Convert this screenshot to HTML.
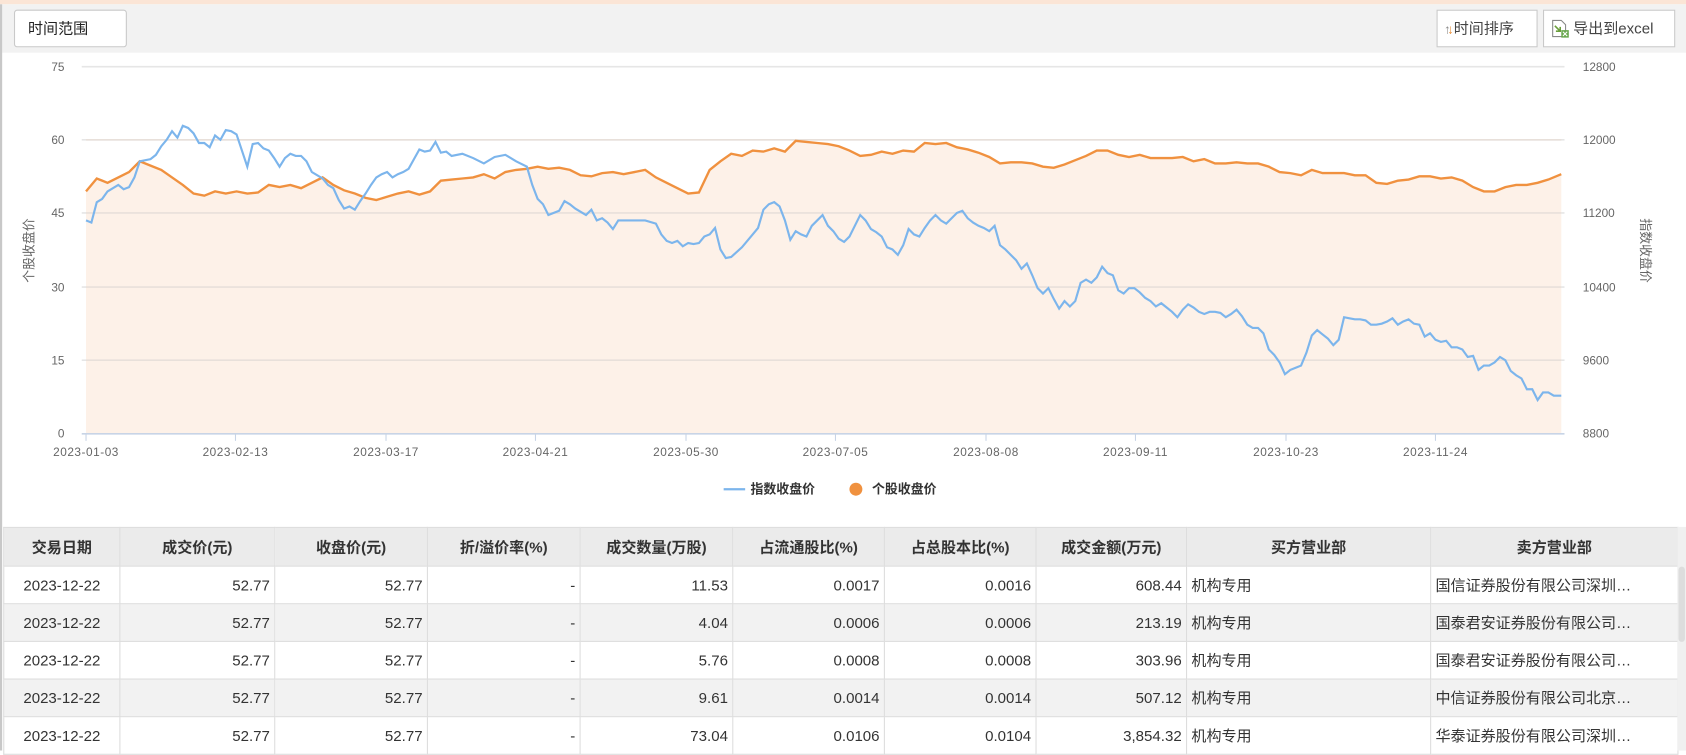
<!DOCTYPE html>
<html><head><meta charset="utf-8"><style>
html,body{margin:0;padding:0;width:1686px;height:750px;overflow:hidden;background:#fff}
#w{position:absolute;left:0;top:0;width:1568px;height:698px;transform:scale(1.07526);transform-origin:0 0;font-family:"Liberation Sans","Noto Sans CJK SC",sans-serif;color:#333}
.strip{position:absolute;left:0;top:0;width:1568px;height:4px;background:#fbe5d6}
.bar{position:absolute;left:0;top:4px;width:1568px;height:45px;background:#f2f2f2}
.lb{position:absolute;left:0;top:4px;width:2px;height:694px;background:#c8c8c8}
.btn{position:absolute;top:9px;height:33px;background:#fff;border:1px solid #c9c9c9;font-size:14px;line-height:33px;box-sizing:content-box}
table{position:absolute;left:3px;top:490px;border-collapse:collapse;table-layout:fixed;font-size:14px}
td,th{height:34px;border:1px solid #ddd;padding:0 4px;white-space:nowrap;overflow:hidden}
th{background:#ebebeb;font-weight:bold;text-align:center;height:35px;color:#333}
td{text-align:right;color:#333}
td.c{text-align:center}td.l{text-align:left}
tr.g td{background:#f2f2f2}
.sb{position:absolute;left:1560px;top:490px;width:8px;height:208px;background:#f0f0f0}
.sb i{position:absolute;left:1px;top:37px;width:6px;height:70px;background:#ddd;border-radius:3px}
</style></head><body><div id="w">
<div class="strip"></div><div class="bar"></div><div class="lb"></div>
<div class="btn" style="left:13px;width:103px;border-radius:3px;padding-left:0"><span style="margin-left:12px;color:#222">时间范围</span></div>
<div class="btn" style="left:1336px;width:92px;color:#444"><span style="margin-left:6px;font-size:12px;color:#888">↑</span><span style="font-size:12px;color:#e8892f;margin-left:-3px">↓</span>时间排序</div>
<div class="btn" style="left:1435px;width:121px;color:#444"><svg width="18" height="18" viewBox="0 0 18 18" style="position:absolute;left:6px;top:8px"><path d="M2 1h8l4 4v11H2z" fill="#fff" stroke="#888"/><path d="M4 6l5 5M9 7v4H5" stroke="#6a9e3b" stroke-width="1.5" fill="none"/><rect x="10" y="10" width="7" height="7" fill="#6aa84f"/><path d="M11.5 11.5l4 4M15.5 11.5l-4 4" stroke="#fff"/></svg><span style="margin-left:27px">导出到excel</span></div>
<svg style="position:absolute;left:0;top:49px" width="1568" height="440" viewBox="0 49 1568 440" font-family="Liberation Sans,Noto Sans CJK SC,sans-serif">
<g stroke="#e6e6e6" stroke-width="1.5"><line x1="76" y1="62" x2="1455" y2="62"/><line x1="76" y1="130" x2="1455" y2="130"/><line x1="76" y1="198" x2="1455" y2="198"/><line x1="76" y1="267" x2="1455" y2="267"/><line x1="76" y1="335" x2="1455" y2="335"/></g>
<g id="or"></g>
<polygon fill="#fdf1e8" points="80,403 80,178 90,166 95,168 100,170 110,165 120,160 130,150 140,154 150,158 160,165 170,172 180,180 190,182 200,178 210,180 220,178 230,180 240,179 250,172 260,174 270,172 280,175 290,170 300,165 310,172 320,177 330,180 340,184 350,186 360,183 370,180 380,178 390,181 400,178 410,168 420,167 430,166 440,165 450,162 460,166 470,160 480,158 490,157 500,155 510,157 520,156 530,158 540,163 550,164 560,161 570,160 580,162 590,160 600,158 610,165 620,170 630,175 640,180 650,179 660,158 670,150 680,143 690,145 700,140 710,141 720,138 730,141 740,131 750,132 760,133 770,134 780,136 790,140 800,145 810,144 820,141 830,143 840,140 850,141 860,133 870,134 880,133 890,137 900,139 910,142 920,146 930,152 940,151 950,151 960,152 970,155 980,156 990,153 1000,149 1010,145 1020,140 1030,140 1040,144 1050,146 1060,144 1070,147 1080,147 1090,147 1100,146 1110,150 1120,148 1130,152 1140,152 1150,151 1160,152 1170,152 1180,155 1190,160 1200,161 1210,163 1220,158 1230,161 1240,161 1250,161 1260,163 1270,163 1280,170 1290,171 1300,168 1310,167 1320,164 1330,164 1340,166 1350,165 1360,168 1370,174 1380,178 1390,178 1400,174 1410,172 1420,172 1430,170 1440,167 1452,162 1452,403"/>
<g stroke="#e8e0da" stroke-width="1.5"><line x1="80" y1="198" x2="1452" y2="198"/><line x1="80" y1="267" x2="1452" y2="267"/><line x1="80" y1="335" x2="1452" y2="335"/><line x1="80" y1="130" x2="1452" y2="130"/></g>
<line x1="76" y1="403.5" x2="1455" y2="403.5" stroke="#c8d4e6" stroke-width="1.5"/>
<g stroke="#c8d4e6"><line x1="80" y1="403" x2="80" y2="410"/><line x1="219" y1="403" x2="219" y2="410"/><line x1="359" y1="403" x2="359" y2="410"/><line x1="498" y1="403" x2="498" y2="410"/><line x1="638" y1="403" x2="638" y2="410"/><line x1="777" y1="403" x2="777" y2="410"/><line x1="917" y1="403" x2="917" y2="410"/><line x1="1056" y1="403" x2="1056" y2="410"/><line x1="1196" y1="403" x2="1196" y2="410"/><line x1="1335" y1="403" x2="1335" y2="410"/></g>
<polyline fill="none" stroke="#f0913f" stroke-width="2.2" points="80,178 90,166 95,168 100,170 110,165 120,160 130,150 140,154 150,158 160,165 170,172 180,180 190,182 200,178 210,180 220,178 230,180 240,179 250,172 260,174 270,172 280,175 290,170 300,165 310,172 320,177 330,180 340,184 350,186 360,183 370,180 380,178 390,181 400,178 410,168 420,167 430,166 440,165 450,162 460,166 470,160 480,158 490,157 500,155 510,157 520,156 530,158 540,163 550,164 560,161 570,160 580,162 590,160 600,158 610,165 620,170 630,175 640,180 650,179 660,158 670,150 680,143 690,145 700,140 710,141 720,138 730,141 740,131 750,132 760,133 770,134 780,136 790,140 800,145 810,144 820,141 830,143 840,140 850,141 860,133 870,134 880,133 890,137 900,139 910,142 920,146 930,152 940,151 950,151 960,152 970,155 980,156 990,153 1000,149 1010,145 1020,140 1030,140 1040,144 1050,146 1060,144 1070,147 1080,147 1090,147 1100,146 1110,150 1120,148 1130,152 1140,152 1150,151 1160,152 1170,152 1180,155 1190,160 1200,161 1210,163 1220,158 1230,161 1240,161 1250,161 1260,163 1270,163 1280,170 1290,171 1300,168 1310,167 1320,164 1330,164 1340,166 1350,165 1360,168 1370,174 1380,178 1390,178 1400,174 1410,172 1420,172 1430,170 1440,167 1452,162"/>
<polyline fill="none" stroke="#7cb5ec" stroke-width="2" points="80,205 85,207 90,188 95,185 100,178 110,172 115,176 120,174 125,165 130,150 140,148 145,144 150,136 155,130 160,122 165,128 170,117 175,119 180,124 185,133 190,133 195,137 200,126 205,130 210,121 215,122 220,125 225,140 230,155 235,134 240,133 245,138 250,140 255,147 260,155 265,147 270,143 275,145 280,145 285,150 290,160 300,166 305,172 310,175 315,186 320,194 325,192 330,195 335,187 340,180 345,172 350,165 355,162 360,160 365,165 370,162 375,160 380,157 385,148 390,139 395,141 400,140 405,132 410,142 415,141 420,145 430,143 440,147 450,152 460,146 470,144 480,150 490,155 495,172 500,185 505,190 510,200 515,198 520,196 525,187 530,190 535,194 540,197 545,200 550,195 555,205 560,203 565,207 570,213 575,205 580,205 590,205 600,205 610,208 615,218 620,224 625,226 630,224 635,229 640,226 645,227 650,226 655,220 660,218 665,212 670,232 675,240 680,239 690,230 700,218 705,212 710,195 715,190 720,188 725,192 730,205 735,223 740,215 745,218 750,220 755,210 760,205 765,200 770,210 775,215 780,222 785,225 790,220 795,210 800,200 805,205 810,213 815,216 820,220 825,230 830,232 835,237 840,228 845,213 850,218 855,220 860,212 865,205 870,200 875,205 880,208 885,203 890,198 895,196 900,203 905,207 910,210 915,212 920,215 925,210 930,228 935,232 940,237 945,242 950,250 955,245 960,256 965,268 970,273 975,268 980,278 985,287 990,280 995,285 1000,280 1005,263 1010,260 1015,263 1020,258 1025,248 1030,254 1035,256 1040,270 1045,273 1050,268 1055,268 1060,272 1065,277 1070,280 1075,285 1080,282 1085,286 1090,290 1095,295 1100,288 1105,283 1110,286 1115,290 1120,292 1125,290 1130,290 1135,291 1140,295 1145,292 1150,288 1155,294 1160,302 1165,305 1170,305 1175,310 1180,325 1185,330 1190,337 1195,348 1200,344 1205,342 1210,340 1215,328 1220,312 1225,307 1230,311 1235,315 1240,321 1245,316 1250,295 1255,296 1260,297 1265,297 1270,298 1275,302 1280,302 1285,301 1290,299 1295,296 1300,302 1305,299 1310,297 1315,301 1320,302 1325,313 1330,310 1335,316 1340,318 1345,317 1350,323 1355,323 1360,325 1365,332 1370,331 1375,344 1380,340 1385,340 1390,337 1395,332 1400,335 1405,345 1410,349 1415,352 1420,362 1425,362 1430,372 1435,365 1440,365 1445,368 1452,368"/>
<g font-size="11" fill="#666" text-anchor="end"><text x="60" y="66">75</text><text x="60" y="134">60</text><text x="60" y="202">45</text><text x="60" y="271">30</text><text x="60" y="339">15</text><text x="60" y="407">0</text></g>
<g font-size="11" fill="#666"><text x="1472" y="66">12800</text><text x="1472" y="134">12000</text><text x="1472" y="202">11200</text><text x="1472" y="271">10400</text><text x="1472" y="339">9600</text><text x="1472" y="407">8800</text></g>
<g font-size="11" fill="#666" text-anchor="middle" letter-spacing="0.5"><text x="80" y="424">2023-01-03</text><text x="219" y="424">2023-02-13</text><text x="359" y="424">2023-03-17</text><text x="498" y="424">2023-04-21</text><text x="638" y="424">2023-05-30</text><text x="777" y="424">2023-07-05</text><text x="917" y="424">2023-08-08</text><text x="1056" y="424">2023-09-11</text><text x="1196" y="424">2023-10-23</text><text x="1335" y="424">2023-11-24</text></g>
<text x="0" y="0" font-size="12" fill="#666" text-anchor="middle" transform="translate(31,233) rotate(-90)">个股收盘价</text>
<text x="0" y="0" font-size="12" fill="#666" text-anchor="middle" transform="translate(1526,233) rotate(90)">指数收盘价</text>
<line x1="673" y1="455" x2="693" y2="455" stroke="#7cb5ec" stroke-width="2"/>
<text x="698" y="459" font-size="12" font-weight="bold" fill="#333">指数收盘价</text>
<circle cx="796" cy="455" r="6" fill="#f0913f"/>
<text x="811" y="459" font-size="12" font-weight="bold" fill="#333">个股收盘价</text>
</svg>
<table>
<colgroup><col style="width:108px"><col style="width:144px"><col style="width:142px"><col style="width:142px"><col style="width:142px"><col style="width:141px"><col style="width:141px"><col style="width:140px"><col style="width:227px"><col style="width:230px"></colgroup>
<tr><th>交易日期</th><th>成交价(元)</th><th>收盘价(元)</th><th>折/溢价率(%)</th><th>成交数量(万股)</th><th>占流通股比(%)</th><th>占总股本比(%)</th><th>成交金额(万元)</th><th>买方营业部</th><th>卖方营业部</th></tr>
<tr><td class="c">2023-12-22</td><td>52.77</td><td>52.77</td><td>-</td><td>11.53</td><td>0.0017</td><td>0.0016</td><td>608.44</td><td class="l">机构专用</td><td class="l">国信证券股份有限公司深圳…</td></tr>
<tr class="g"><td class="c">2023-12-22</td><td>52.77</td><td>52.77</td><td>-</td><td>4.04</td><td>0.0006</td><td>0.0006</td><td>213.19</td><td class="l">机构专用</td><td class="l">国泰君安证券股份有限公司…</td></tr>
<tr><td class="c">2023-12-22</td><td>52.77</td><td>52.77</td><td>-</td><td>5.76</td><td>0.0008</td><td>0.0008</td><td>303.96</td><td class="l">机构专用</td><td class="l">国泰君安证券股份有限公司…</td></tr>
<tr class="g"><td class="c">2023-12-22</td><td>52.77</td><td>52.77</td><td>-</td><td>9.61</td><td>0.0014</td><td>0.0014</td><td>507.12</td><td class="l">机构专用</td><td class="l">中信证券股份有限公司北京…</td></tr>
<tr><td class="c">2023-12-22</td><td>52.77</td><td>52.77</td><td>-</td><td>73.04</td><td>0.0106</td><td>0.0104</td><td>3,854.32</td><td class="l">机构专用</td><td class="l">华泰证券股份有限公司深圳…</td></tr>
</table>
<div class="sb"><i></i></div>
</div></body></html>
